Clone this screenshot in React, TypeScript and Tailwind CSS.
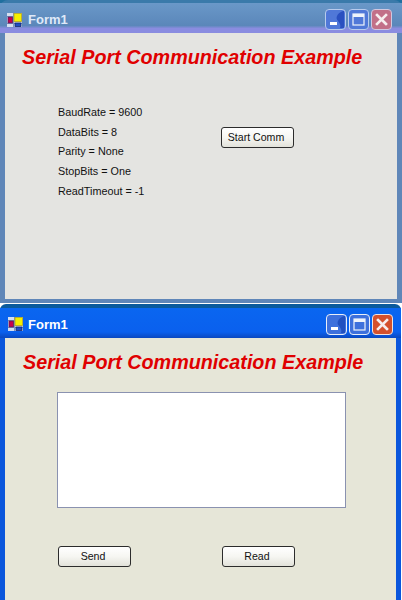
const fontUi = "font-['Liberation_Sans',Arial,sans-serif]";

function AppIcon() {
  return (
    <svg width="15" height="14" viewBox="0 0 15 14" className="shrink-0">
      <rect x="0" y="0" width="15" height="14" fill="#d5dff0" />
      <path d="M0 3.5H6M0 10.5H15M6.5 0V14" stroke="#7f96c0" strokeWidth="1" />
      <rect x="1" y="4" width="4.5" height="6" fill="#c8004a" stroke="#4a2060" strokeWidth="0.8" />
      <rect x="7" y="0.5" width="7.5" height="8" fill="#f5f000" stroke="#b0a020" strokeWidth="0.8" />
      <rect x="8" y="10" width="6" height="3.5" fill="#1f4cc0" stroke="#10246e" strokeWidth="0.8" />
    </svg>
  );
}

function WinButtons({ faded }: { faded: boolean }) {
  const blue = faded ? "bg-[#5078d8] border-[#b8cbec]" : "bg-[#3d70dc] border-[#e8eef8]";
  const red = faded ? "bg-[#c27088] border-[#cfc8e0]" : "bg-[#d4502c] border-[#f0e4e0]";
  return (
    <div className="flex gap-[2px]">
      <div className={`w-[21px] h-[21px] rounded-[4px] border ${blue}`}>
        <svg viewBox="0 0 19 19" className="w-full h-full">
          <path d="M17 1 C11 3 9 8 12 11 C14 13 15 16 14 18 L18 18 L18 1 Z" fill={faded ? "#2a50c0" : "#2050c0"} />
          <rect x="4" y="12" width="7" height="3" fill="white" />
        </svg>
      </div>
      <div className={`w-[21px] h-[21px] rounded-[4px] border ${blue}`}>
        <svg viewBox="0 0 19 19" className="w-full h-full">
          <rect x="4" y="4" width="11" height="11" fill="none" stroke="#eef3fb" strokeWidth="1.2" />
          <rect x="4" y="4" width="11" height="3" fill="#eef3fb" />
        </svg>
      </div>
      <div className={`w-[21px] h-[21px] rounded-[4px] border ${red}`}>
        <svg viewBox="0 0 19 19" className="w-full h-full">
          <path d="M5 5 L14 14 M14 5 L5 14" stroke="#f6eeee" strokeWidth="2.6" strokeLinecap="square" />
        </svg>
      </div>
    </div>
  );
}

function XpButton({ label }: { label: string }) {
  return (
    <button className="w-[73px] h-[21px] pr-[3px] rounded-[3px] border border-[#2c2c2c] bg-gradient-to-b from-white via-[#f6f6f2] to-[#e2e2da] text-[10.6px] leading-[19px] text-[#111] text-center font-['Liberation_Sans',Arial,sans-serif]">
      {label}
    </button>
  );
}

function Heading() {
  return (
    <h1 className="text-[19.75px] leading-[24px] font-bold italic text-[#e00000] whitespace-nowrap">
      Serial Port Communication Example
    </h1>
  );
}

const settings = [
  { text: "BaudRate = 9600", cls: "h-[20px]" },
  { text: "DataBits = 8", cls: "h-[20px]" },
  { text: "Parity = None", cls: "h-[19px]" },
  { text: "StopBits = One", cls: "h-[20px]" },
  { text: "ReadTimeout = -1", cls: "h-[21px]" },
];

export default function App() {
  return (
    <div className={`w-[402px] h-[600px] overflow-hidden bg-white ${fontUi}`}>
      {/* first form, captured while inactive */}
      <div className="h-[303px] bg-[#1f6f9f]">
        <div className="h-full bg-[#5f86b8] rounded-t-[8px] border-t-[3px] border-[#3a7aaa] px-[5px] pb-[4px] flex flex-col">
          <div className="h-[30px] pt-[3px] -mx-[5px] pl-[7px] pr-[10px] flex items-center gap-[6px] bg-gradient-to-b from-[#6a98c8] via-[#5b87ba] via-75% to-[#8a8ce0] to-85%">
            <AppIcon />
            <span className="mt-[1px] text-[13px] font-bold text-[#dfe9f8]">Form1</span>
            <div className="ml-auto">
              <WinButtons faded />
            </div>
          </div>
          <div className="flex-1 bg-[#e4e4e1]">
            <div className="pl-[17px] pt-[12px]">
              <Heading />
            </div>
            <div className="flex pl-[53px] pt-[33px]">
              <div className="w-[163px] flex flex-col text-[10.8px] text-[#111]">
                {settings.map((s) => (
                  <div key={s.text} className={`${s.cls} flex items-center`}>
                    {s.text}
                  </div>
                ))}
              </div>
              <div className="pt-[25px] flex items-start">
                <XpButton label="Start Comm" />
              </div>
            </div>
          </div>
        </div>
      </div>
      <div className="h-px bg-white" />

      {/* second form, active */}
      <div className="h-[296px] pr-px bg-white">
        <div className="h-full bg-[#0a56dc] rounded-t-[6px] border-t-[4px] border-[#0a5a9c] px-[5px] flex flex-col">
          <div className="h-[30px] pt-[2px] -mx-[5px] pl-[8px] pr-[8px] flex items-center gap-[5px] bg-gradient-to-b from-[#0a66f0] via-[#0a60ee] via-80% to-[#0a48c0]">
            <AppIcon />
            <span className="mt-[1px] text-[13px] font-bold text-white">Form1</span>
            <div className="ml-auto">
              <WinButtons faded={false} />
            </div>
          </div>
          <div className="flex-1 bg-[#e6e6d8]">
            <div className="pl-[18px] pt-[12px]">
              <Heading />
            </div>
            <div className="ml-[52px] mt-[18px] w-[289px] h-[116px] bg-white border border-[#8a92b0]" />
            <div className="ml-[53px] mt-[38px] w-[237px] flex justify-between">
              <XpButton label="Send" />
              <XpButton label="Read" />
            </div>
          </div>
        </div>
      </div>
    </div>
  );
}
